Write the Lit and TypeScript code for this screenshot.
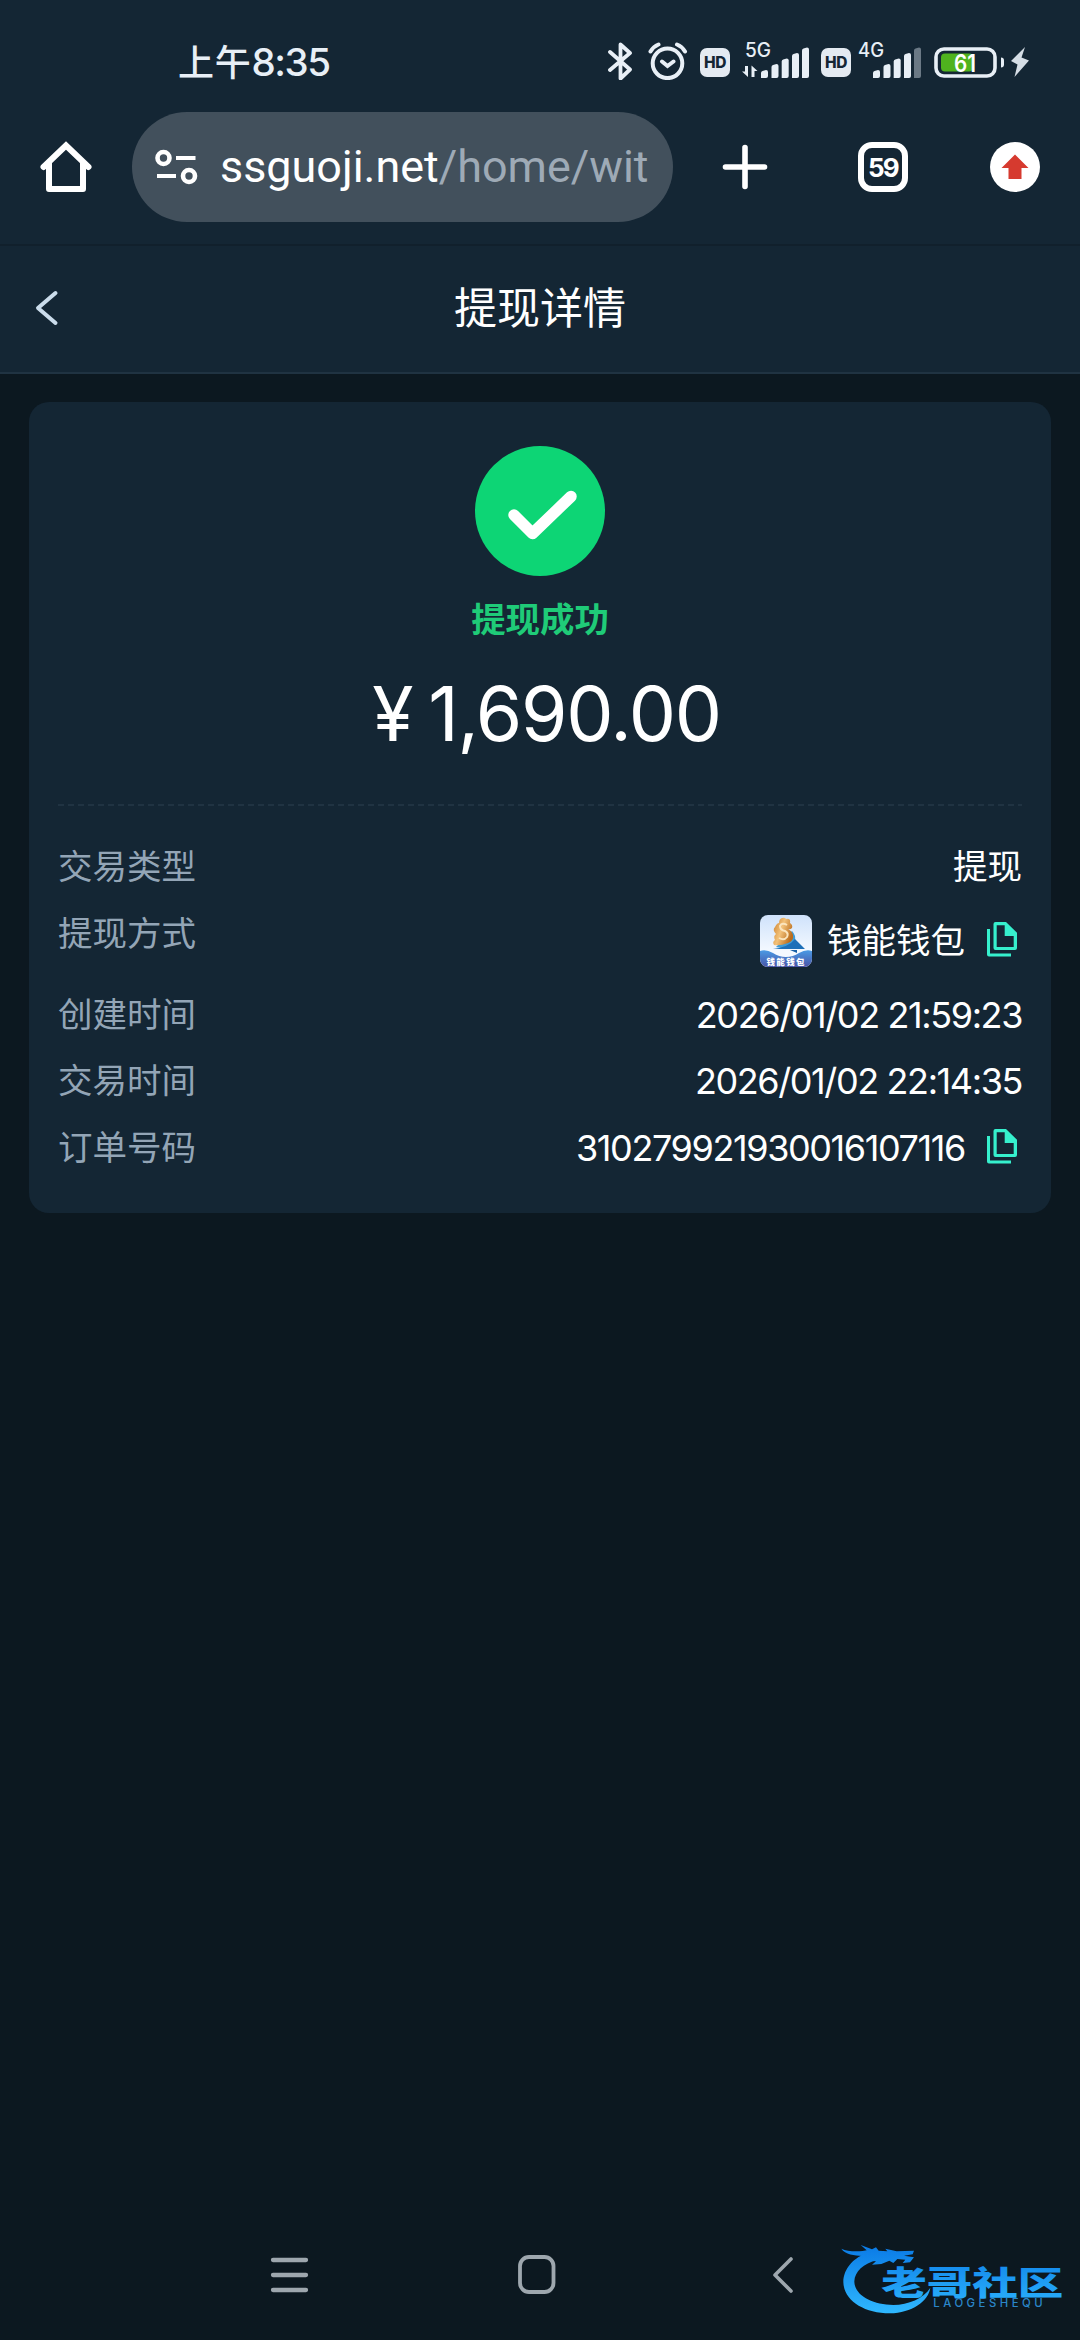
import { LitElement, html, css, svg } from 'lit';
import { customElement, property } from 'lit/decorators.js';

// one row of the detail list
interface Row {
  label: string;
  value: string;
  wallet?: boolean;
  copy?: boolean;
}

const rows: Row[] = [
  { label: '交易类型', value: '提现' },
  { label: '提现方式', value: '钱能钱包', wallet: true, copy: true },
  { label: '创建时间', value: '2026/01/02 21:59:23' },
  { label: '交易时间', value: '2026/01/02 22:14:35' },
  { label: '订单号码', value: '310279921930016107116', copy: true },
];

// signal bars: x, top edge
const bars = [
  [0, 70],
  [10.5, 64],
  [20.7, 58.5],
  [31, 53],
  [41, 47.5],
];

@customElement('signal-icon')
export class SignalIcon extends LitElement {
  @property() net = '5G';
  @property({ type: Number }) level = 5;
  @property({ type: Boolean }) arrows = false;

  static styles = css`
    :host {
      display: block;
      height: 46px;
    }
    svg {
      display: block;
    }
    text {
      font-family: Inter, sans-serif;
      font-size: 19.5px;
      font-weight: 500;
      fill: #e8eff6;
    }
  `;

  render() {
    // the 5G icon is wider, it has the traffic arrows in front of the bars
    const start = this.arrows ? 19 : 15;
    return html`
      <svg width="${start + 48}" height="46" viewBox="0 34 ${start + 48} 46">
        <text x="${this.arrows ? 3 : 0}" y="57" textLength="26" lengthAdjust="spacingAndGlyphs">${this.net}</text>
        ${this.arrows
          ? svg`<path d="M6 66v11L0 71.5h3V66zM9.500 77V65.500l6 5.500h-3v6z" fill="#e8eff6" />`
          : ''}
        ${bars.map(
          ([x, top], i) => svg`
            <path
              d="M${start + x} 78v${-(78 - top - 3)}q0-1.500 1.500-2l3.500-1q2 0 2 2V76q0 2-2 2z"
              fill="${i < this.level ? '#e8eff6' : '#6b7985'}" />`
        )}
      </svg>
    `;
  }
}

@customElement('status-bar')
export class StatusBar extends LitElement {
  static styles = css`
    :host {
      display: flex;
      align-items: center;
      height: 104px;
      padding: 0 51px 0 178px;
      box-sizing: border-box;
      color: #e8eff6;
    }
    .time {
      flex: 1;
      font-family: Inter, 'Noto Sans CJK SC', sans-serif;
      font-size: 38.5px;
      font-weight: 500;
      line-height: 104px;
      letter-spacing: -1.4px;
      padding-top: 20px;
      white-space: nowrap;
    }
    .zh {
      font-size: 36px;
      letter-spacing: 0.7px;
    }
    .icons {
      display: flex;
      align-items: flex-end;
      height: 46px;
      padding-top: 10px;
    }
    svg {
      display: block;
    }
    .clock {
      margin-left: 15px;
    }
    .hd {
      width: 30px;
      height: 29px;
      border-radius: 7px;
      background: #e4eaf1;
      color: #142634;
      font: 800 15.5px/29px Inter, sans-serif;
      letter-spacing: -0.5px;
      text-align: center;
      margin: 0 12px 3px 12px;
    }
    .second {
      margin-right: 7px;
    }
    .battery {
      margin-left: 13px;
    }
    .battery text {
      font: 600 24px Inter, sans-serif;
      fill: #fff;
    }
  `;

  render() {
    return html`
      <div class="time"><span class="zh">上午</span>8:35</div>
      <div class="icons">
        <svg width="25" height="40" viewBox="0 0 25 40" fill="none" stroke="#e8eff6" stroke-width="3.8" stroke-linejoin="round" stroke-linecap="round">
          <path d="M2 12l20 17.500-9.500 9V4.500l9.500 8.500L2 30" />
        </svg>
        <svg class="clock" width="40" height="40" viewBox="0 0 40 40" fill="none" stroke="#e8eff6" stroke-width="4" stroke-linecap="round">
          <circle cx="19.500" cy="23.300" r="14.800" />
          <path d="M2.500 11.500q3-5 8-7M37 11.500q-3-5-8-7M14 21.500l5.500 4.500 6-4.500" />
        </svg>
        <div class="hd">HD</div>
        <signal-icon net="5G" arrows level="5"></signal-icon>
        <div class="hd second">HD</div>
        <signal-icon net="4G" level="4"></signal-icon>
        <svg class="battery" width="95" height="40" viewBox="0 0 95 40">
          <rect x="2" y="9" width="59" height="27" rx="8" fill="none" stroke="#e8eff6" stroke-width="3.600" />
          <rect x="7" y="13.500" width="32" height="18" rx="4" fill="#4fb31e" />
          <path d="M67 17.500q3 0 3 3v4q0 3-3 3z" fill="#e8eff6" />
          <text x="20" y="31.500" textLength="22" lengthAdjust="spacingAndGlyphs">61</text>
          <path d="M91 7L77 21l6.500 3.500L80.500 37 95 20.500l-7.500-3z" fill="#d5dde5" />
        </svg>
      </div>
    `;
  }
}

@customElement('browser-bar')
export class BrowserBar extends LitElement {
  static styles = css`
    :host {
      display: flex;
      align-items: center;
      height: 142px;
      padding: 7px 40px 21px 40px;
      box-sizing: border-box;
      border-bottom: 2px solid #11202c;
    }
    svg {
      display: block;
      flex: none;
    }
    .pill {
      display: flex;
      align-items: center;
      width: 541px;
      height: 110px;
      margin-left: 40px;
      padding: 0 22px;
      box-sizing: border-box;
      border-radius: 55px;
      background: #42505c;
    }
    .url {
      margin-left: 22px;
      font: 400 44.9px/110px Roboto, sans-serif;
      color: #fff;
      white-space: nowrap;
    }
    .path {
      color: #9eaab6;
    }
    .plus {
      margin-left: 49px;
    }
    .tabs {
      width: 50px;
      height: 50px;
      box-sizing: border-box;
      border: 6px solid #fff;
      border-radius: 14px;
      margin-left: 90px;
      color: #fff;
      font: 700 26px/39px Inter, sans-serif;
      letter-spacing: -1.8px;
      text-align: center;
    }
    .update {
      margin-left: 82px;
    }
  `;

  render() {
    return html`
      <svg width="52" height="52" viewBox="0 0 52 52" fill="none" stroke="#fff" stroke-width="6" stroke-linejoin="round">
        <path d="M9 21v27h34V21" />
        <path d="M3.500 26L26 4.500 48.500 26" stroke-linejoin="miter" stroke-linecap="round" />
      </svg>
      <div class="pill">
        <svg width="44" height="36" viewBox="0 0 44 36" fill="none" stroke="#fff" stroke-width="4.600">
          <circle cx="9.500" cy="9" r="6" />
          <circle cx="35" cy="27" r="6" />
          <path d="M22 9h19.500M3 27h19" stroke-width="4.200" />
        </svg>
        <div class="url">ssguoji.net<span class="path">/home/wit</span></div>
      </div>
      <svg class="plus" width="46" height="46" viewBox="0 0 46 46" stroke="#fff" stroke-width="5.600" stroke-linecap="round">
        <path d="M23 3.500v39M3.500 23h39" />
      </svg>
      <div class="tabs">59</div>
      <svg class="update" width="50" height="50" viewBox="0 0 50 50">
        <circle cx="25" cy="25" r="25" fill="#fff" />
        <path d="M25 12.500l13.500 13.500h-7V37h-13V26h-7z" fill="#d63a2f" />
      </svg>
    `;
  }
}

@customElement('page-header')
export class PageHeader extends LitElement {
  static styles = css`
    :host {
      display: grid;
      grid-template-columns: 100px 1fr 100px;
      align-items: center;
      height: 128px;
      padding-bottom: 3px;
      box-sizing: border-box;
      border-bottom: 2px solid #203342;
    }
    .back {
      margin-left: 34px;
    }
    .title {
      font: 400 43px/114px 'Noto Sans CJK SC', sans-serif;
      color: #fff;
      text-align: center;
      padding-bottom: 6px;
    }
  `;

  render() {
    return html`
      <svg class="back" width="26" height="38" viewBox="0 0 26 38" fill="none" stroke="#cbdceb" stroke-width="4" stroke-linecap="round" stroke-linejoin="round">
        <path d="M21.500 4L4 19l17.500 15" />
      </svg>
      <div class="title">提现详情</div>
    `;
  }
}

@customElement('wallet-logo')
export class WalletLogo extends LitElement {
  static styles = css`
    :host {
      display: block;
      width: 52px;
      height: 52px;
      border-radius: 8px;
      overflow: hidden;
    }
    svg {
      display: block;
    }
    text {
      font: 900 8.5px 'Noto Sans CJK SC', sans-serif;
      fill: #fff;
    }
  `;

  render() {
    return html`
      <svg width="52" height="52" viewBox="0 0 52 52">
        <defs>
          <linearGradient id="sky" x1="0" y1="0" x2="0" y2="1">
            <stop offset="0" stop-color="#cfe2fb" />
            <stop offset="0.700" stop-color="#f4f9ff" />
          </linearGradient>
          <linearGradient id="sea" x1="0" y1="0" x2="0" y2="1">
            <stop offset="0" stop-color="#4a9ae4" />
            <stop offset="1" stop-color="#4a55a8" />
          </linearGradient>
          <linearGradient id="gold" x1="0" y1="0" x2="1" y2="0.500">
            <stop offset="0" stop-color="#c87a25" />
            <stop offset="0.500" stop-color="#f3c27a" />
            <stop offset="1" stop-color="#b96c1d" />
          </linearGradient>
        </defs>
        <rect width="52" height="52" fill="url(#sky)" />
        <path d="M32 16q4 4 3 10l-9 8-10-2z" fill="#3f9bd6" />
        <path d="M14 30q-2-3 1-5-2-4 1-6-4-4-1-7 2-4 4-4 0-4 3-5 3-1 4 1 5-1 4 4 3 2 2 5-2 2-4 1 4 2 5 6 1 6-5 8-8 3-14 2z" fill="url(#gold)" />
        <path d="M27 10q-5-3-7 1 0 4 5 5 4 2 2 6-3 4-8 1" stroke="#fbe5bd" stroke-width="2" fill="none" />
        <path d="M13 34q16-2 22-10l10 10z" fill="#1c6fb8" />
        <path d="M30 35h7v3z" fill="#1760a6" />
        <path d="M0 36q6-2 13 2 6 4 13 4 7 0 13-4 7-4 13-2v16H0z" fill="url(#sea)" />
        <text x="6.500" y="50" textLength="38">钱能钱包</text>
      </svg>
    `;
  }
}

@customElement('detail-card')
export class DetailCard extends LitElement {
  static styles = css`
    :host {
      display: flex;
      flex-direction: column;
      align-items: stretch;
      margin: 28px 29px 0;
      padding: 44px 29px 32px;
      border-radius: 20px;
      background: #142634;
      font-family: Inter, 'Noto Sans CJK SC', sans-serif;
      color: #fff;
    }
    svg {
      display: block;
      flex: none;
    }
    .ok {
      align-self: center;
    }
    .status {
      font: 700 34.4px/50px 'Noto Sans CJK SC', sans-serif;
      color: #1fcb78;
      text-align: center;
      margin-top: 16px;
    }
    .amount {
      display: flex;
      justify-content: center;
      align-items: baseline;
      height: 145px;
      padding-left: 13px;
      gap: 16px;
      font-size: 75px;
      line-height: 143px;
      letter-spacing: -1.3px;
    }
    .dashes {
      height: 2px;
      margin-top: 17px;
      background: repeating-linear-gradient(90deg, #203342 0 6px, transparent 6px 10px);
    }
    .rows {
      padding-top: 28px;
    }
    .row {
      display: flex;
      justify-content: space-between;
      min-height: 66.5px;
      font-size: 34.5px;
      line-height: 66.5px;
    }
    .label {
      color: #93a5b6;
    }
    .value {
      display: flex;
      align-items: center;
    }
    .num {
      font-size: 36px;
      letter-spacing: -1.4px;
    }
    .wallet {
      height: 81px;
    }
    .wallet .value {
      height: 81px;
    }
    wallet-logo {
      margin-right: 15px;
    }
    .copy {
      margin: 0 5px 3px 22px;
    }
  `;

  renderRow(row: Row) {
    return html`
      <div class="row ${row.wallet ? 'wallet' : ''}">
        <div class="label">${row.label}</div>
        <div class="value">
          ${row.wallet ? html`<wallet-logo></wallet-logo>` : ''}
          <span class="${/^\d/.test(row.value) ? 'num' : ''}">${row.value}</span>
          ${row.copy
            ? html`
                <svg class="copy" width="30" height="35" viewBox="0 0 30 35" fill="#36f0cd">
                  <path fill-rule="evenodd" d="M8.500 0H19l11 10.700V26q0 2-2 2H8.500q-2 0-2-2V2q0-2 2-2zM9.700 3.300V25h17V14h-9V3.300z" />
                  <path d="M0 7h3v24.500h21v3H2q-2 0-2-2z" />
                </svg>
              `
            : ''}
        </div>
      </div>
    `;
  }

  render() {
    return html`
      <svg class="ok" width="130" height="130" viewBox="0 0 130 130">
        <circle cx="65" cy="65" r="65" fill="#0dd575" />
        <path d="M39 69l18.500 18.500L96 50.500" fill="none" stroke="#fff" stroke-width="11.500" stroke-linecap="round" stroke-linejoin="round" />
      </svg>
      <div class="status">提现成功</div>
      <div class="amount"><span>¥</span><span>1,690.00</span></div>
      <div class="dashes"></div>
      <div class="rows">${rows.map((row) => this.renderRow(row))}</div>
    `;
  }
}

@customElement('nav-bar')
export class NavBar extends LitElement {
  static styles = css`
    :host {
      display: flex;
      align-items: center;
      height: 130px;
      padding: 0 286px 0 270px;
      justify-content: space-between;
    }
    .home {
      margin-right: 8px;
    }
  `;

  render() {
    return html`
      <svg width="40" height="40" viewBox="0 0 40 40" stroke="#9ea7ae" stroke-width="4.300" stroke-linecap="round">
        <path d="M3 5h33M3 20h33M3 35h33" />
      </svg>
      <svg class="home" width="40" height="42" viewBox="0 0 40 42" fill="none" stroke="#9ea7ae" stroke-width="3.800">
        <rect x="3" y="3" width="33.500" height="35" rx="9" />
      </svg>
      <svg width="22" height="40" viewBox="0 0 22 40" fill="none" stroke="#9ea7ae" stroke-width="3.600" stroke-linecap="round" stroke-linejoin="round">
        <path d="M19 4L3 20l16 16" />
      </svg>
    `;
  }
}

// community stamp over the bottom right corner
@customElement('site-stamp')
export class SiteStamp extends LitElement {
  static styles = css`
    :host {
      position: absolute;
      right: 10px;
      bottom: 20px;
    }
    svg {
      display: block;
    }
    .name {
      font: 900 98px 'Noto Sans CJK SC', sans-serif;
    }
    .latin {
      font: 500 34px Inter, sans-serif;
      fill: #2a86c9;
    }
  `;

  render() {
    return html`
      <svg width="230" height="80" viewBox="120 60 690 240" fill="url(#blue)">
        <defs>
          <linearGradient id="blue" gradientUnits="userSpaceOnUse" x1="0" y1="78" x2="0" y2="280">
            <stop offset="0" stop-color="#0b7be6" />
            <stop offset="1" stop-color="#2fb8ff" />
          </linearGradient>
        </defs>
        <!-- crescent body -->
        <path d="M208 97C160 112 131 146 130 186C131 240 190 280 270 280C335 278 385 245 391 203C370 236 325 254 280 255C215 254 163 225 163 184C164 155 190 130 232 120Z" />
        <!-- head, whiskers and horns -->
        <path d="M124 86C140 94 165 95 188 93L200 91L182 75L216 88L228 82L236 92L262 94L256 86L290 94L342 92L338 103L312 107L342 112L330 127L308 129L316 119L292 117L280 129L268 122L244 132L216 134L228 124L204 122L186 108C165 106 135 104 124 86Z" />
        <text class="name" x="244" y="224" textLength="546" lengthAdjust="spacingAndGlyphs">老哥社区</text>
        <text class="latin" x="400" y="262" textLength="328">LAOGESHEQU</text>
      </svg>
    `;
  }
}

@customElement('app-root')
export class AppRoot extends LitElement {
  static styles = css`
    :host {
      display: flex;
      flex-direction: column;
      position: relative;
      width: 1080px;
      height: 2340px;
      background: #0c1820;
      overflow: hidden;
    }
    .top {
      background: #142634;
    }
    .content {
      flex: 1;
    }
  `;

  render() {
    return html`
      <div class="top">
        <status-bar></status-bar>
        <browser-bar></browser-bar>
        <page-header></page-header>
      </div>
      <div class="content">
        <detail-card></detail-card>
      </div>
      <nav-bar></nav-bar>
      <site-stamp></site-stamp>
    `;
  }
}
